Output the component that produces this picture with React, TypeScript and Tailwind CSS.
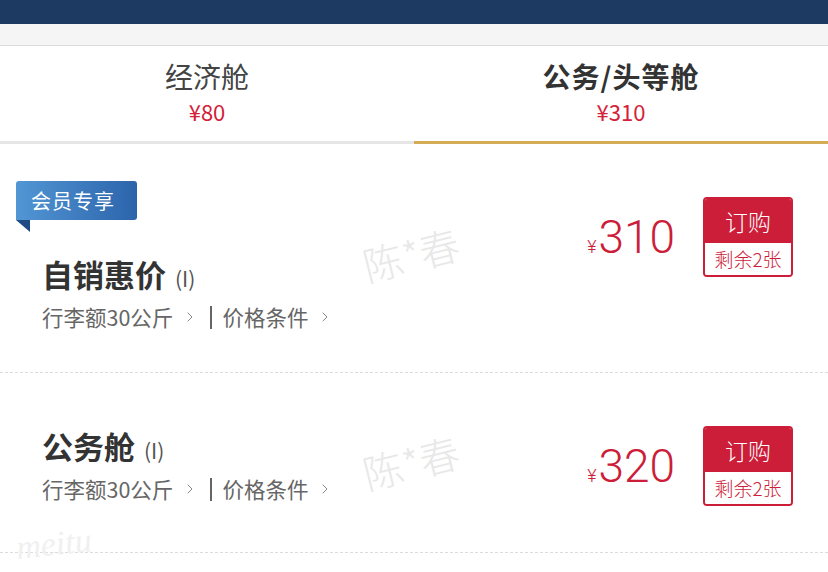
import React from 'react';
import { ChevronRight } from 'lucide-react';

interface Fare {
  name: string;
  price: number;
  member?: boolean;
}

const fares: Fare[] = [
  { name: '自销惠价', price: 310, member: true },
  { name: '公务舱', price: 320 },
];

const cjk = "font-['Noto_Sans_CJK_SC','Noto_Sans',sans-serif]";

const Watermark = ({ top }: { top: number }) => (
  <div
    className="absolute left-[362px] text-[40px] leading-none font-light text-[#e8e8e8] -rotate-[14deg] select-none"
    style={{ top }}
  >
    陈*春
  </div>
);

const BuyButton = () => (
  <div className="w-[90px] h-[80px] rounded-[4px] border-[2px] border-[#cc1d39] flex flex-col overflow-hidden">
    <div className="h-[44px] bg-[#cc1d39] text-white text-[23px] leading-[44px] text-center font-light">订购</div>
    <div className="flex-1 bg-white text-[#cc1d39] text-[19px] leading-[32px] text-center font-light">剩余2张</div>
  </div>
);

const FareRow = ({ fare }: { fare: Fare }) => (
  <div
    className={`flex border-b border-dashed border-[#dcdcdc] ${fare.member ? 'h-[229px] pt-[37px]' : 'h-[180px] pt-[53px]'}`}
  >
    <div className="flex flex-col">
      {fare.member && (
        <div className="relative ml-[16px] mb-[34px]">
          <div className="w-[121px] h-[39px] rounded-t-[3px] rounded-br-[3px] bg-gradient-to-r from-[#5296d4] to-[#2c64ab] text-white text-[20px] leading-[39px] pl-[15px] tracking-[1px]">
            会员专享
          </div>
          <svg className="absolute left-0 top-[39px]" width="14" height="12" viewBox="0 0 14 12">
            <polygon points="0,0 14,0 14,12" fill="#1e4b84" />
          </svg>
        </div>
      )}
      <div className="ml-[42px] flex items-baseline h-[40px] leading-[40px]">
        <span className="text-[31px] font-bold text-[#333]">{fare.name}</span>
        <span className="ml-[9px] text-[21px] text-[#555]">(I)</span>
      </div>
      <div className="ml-[42px] mt-[8px] flex items-center h-[30px] text-[21.5px] text-[#666]">
        <span>行李额30公斤</span>
        <ChevronRight size={16} strokeWidth={1.5} className="ml-[9px] text-[#888]" />
        <span className="ml-[12px] w-[2px] h-[23px] bg-[#666]" />
        <span className="ml-[10px]">价格条件</span>
        <ChevronRight size={16} strokeWidth={1.5} className="ml-[9px] text-[#888]" />
      </div>
    </div>
    <div className={`ml-auto mr-[35px] flex items-center gap-[28px] h-[80px] ${fare.member ? 'mt-[16px]' : ''}`}>
      <div className="flex items-baseline text-[#cc1d39] font-['Roboto','Liberation_Sans',sans-serif] font-light">
        <span className="text-[18px] mr-[2px]">¥</span>
        <span className="text-[46px] leading-none">{fare.price}</span>
      </div>
      <BuyButton />
    </div>
  </div>
);

export default function App() {
  return (
    <div className={`relative w-[828px] h-[572px] overflow-hidden bg-white ${cjk}`}>
      <div className="h-[24px] bg-[#1d3a63]" />
      <div className="h-[22px] bg-[#f5f5f5] border-b border-[#dcdcdc]" />
      <div className="flex h-[98px]">
        <div className="flex-1 flex flex-col items-center pt-[12px] border-b-[3px] border-[#e6e6e6]">
          <span className="text-[28px] leading-[36px] text-[#444]">经济舱</span>
          <span className="mt-[4px] text-[22px] leading-[26px] text-[#d4213a]">¥80</span>
        </div>
        <div className="flex-1 flex flex-col items-center pt-[12px] border-b-[3px] border-[#d3ad55]">
          <span className="text-[28px] leading-[36px] font-bold text-[#333] tracking-[1px]">公务/头等舱</span>
          <span className="mt-[4px] text-[22px] leading-[26px] text-[#d4213a]">¥310</span>
        </div>
      </div>
      {fares.map(f => (
        <FareRow key={f.name} fare={f} />
      ))}
      <Watermark top={234} />
      <Watermark top={442} />
      <div className="absolute left-[16px] top-[518px] text-[34px] italic text-[#f0f0f0] font-['Liberation_Serif',serif] -rotate-[6deg]">
        meitu
      </div>
    </div>
  );
}
